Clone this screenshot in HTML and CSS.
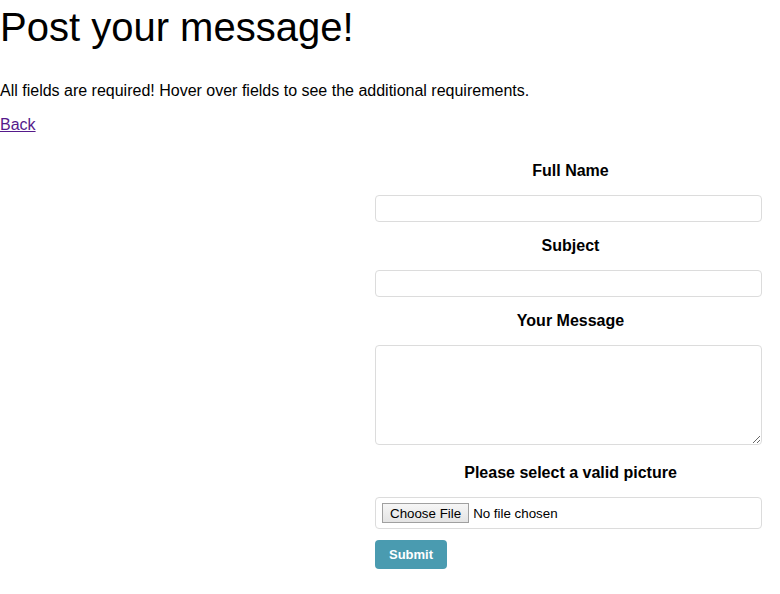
FILE: index.html
```html
<!DOCTYPE html>
<html lang="en">
<head>
<meta charset="utf-8">
<title>Post your message!</title>
<link rel="stylesheet" href="styles.css">
</head>
<body>
<h1 class="title">Post your message!</h1>
<p class="intro">All fields are required! Hover over fields to see the additional requirements.</p>
<a class="back" href="#">Back</a>
<div class="layout">
  <form class="form">
    <label class="label" for="name">Full Name</label>
    <input class="field" id="name" type="text">
    <label class="label" for="subject">Subject</label>
    <input class="field" id="subject" type="text">
    <label class="label" for="msg">Your Message</label>
    <textarea class="area" id="msg"></textarea>
    <label class="label" for="pic">Please select a valid picture</label>
    <input class="file" id="pic" type="file">
    <button class="submit" type="button">Submit</button>
  </form>
</div>
</body>
</html>
```
FILE: styles.css
```css
html, body {
  margin: 0;
  padding: 0;
  background: #fff;
  color: #000;
  font-family: "Liberation Sans", Arial, sans-serif;
  font-size: 16px;
}
.title {
  font-size: 40px;
  font-weight: normal;
  line-height: 46px;
  margin: 4px 0 32px;
}
.intro {
  margin: 0 0 16px;
  line-height: 18px;
}
.back {
  display: block;
  width: max-content;
  line-height: 18px;
  color: #551a8b;
}
.layout {
  display: flex;
  justify-content: flex-end;
  padding-right: 18px;
  margin-top: 28px;
}
.form {
  width: 387px;
  display: flex;
  flex-direction: column;
}
.label {
  display: block;
  font-weight: bold;
  line-height: 18px;
  text-align: center;
  padding-left: 4px;
  margin-bottom: 15px;
}
.field, .area, .file {
  box-sizing: border-box;
  width: 100%;
  border: 1px solid #dcdcdc;
  border-radius: 4px;
  background: #fff;
  font-family: "Liberation Sans", Arial, sans-serif;
  margin: 0;
}
.field {
  display: block;
  height: 27px;
  margin-bottom: 15px;
}
.area {
  display: block;
  height: 100px;
  margin-bottom: 19px;
}
.file {
  display: block;
  height: 32px;
  padding: 5px 6px;
  font-size: 13.333px;
  margin-bottom: 11px;
}
.file::file-selector-button {
  font-family: "Liberation Sans", Arial, sans-serif;
  font-size: 13.333px;
  height: 20px;
  padding: 0 7px;
  margin-right: 4px;
  border: 1px solid #a0a0a0;
  border-radius: 0;
  background: linear-gradient(#f6f6f6, #e4e4e4);
  color: #000;
}
.submit {
  align-self: flex-start;
  width: 72px;
  height: 29px;
  border: 0;
  border-radius: 4px;
  background: #4a9bb0;
  color: #fff;
  font-family: "Liberation Sans", Arial, sans-serif;
  font-weight: bold;
  font-size: 13px;
  padding: 0;
}
```
